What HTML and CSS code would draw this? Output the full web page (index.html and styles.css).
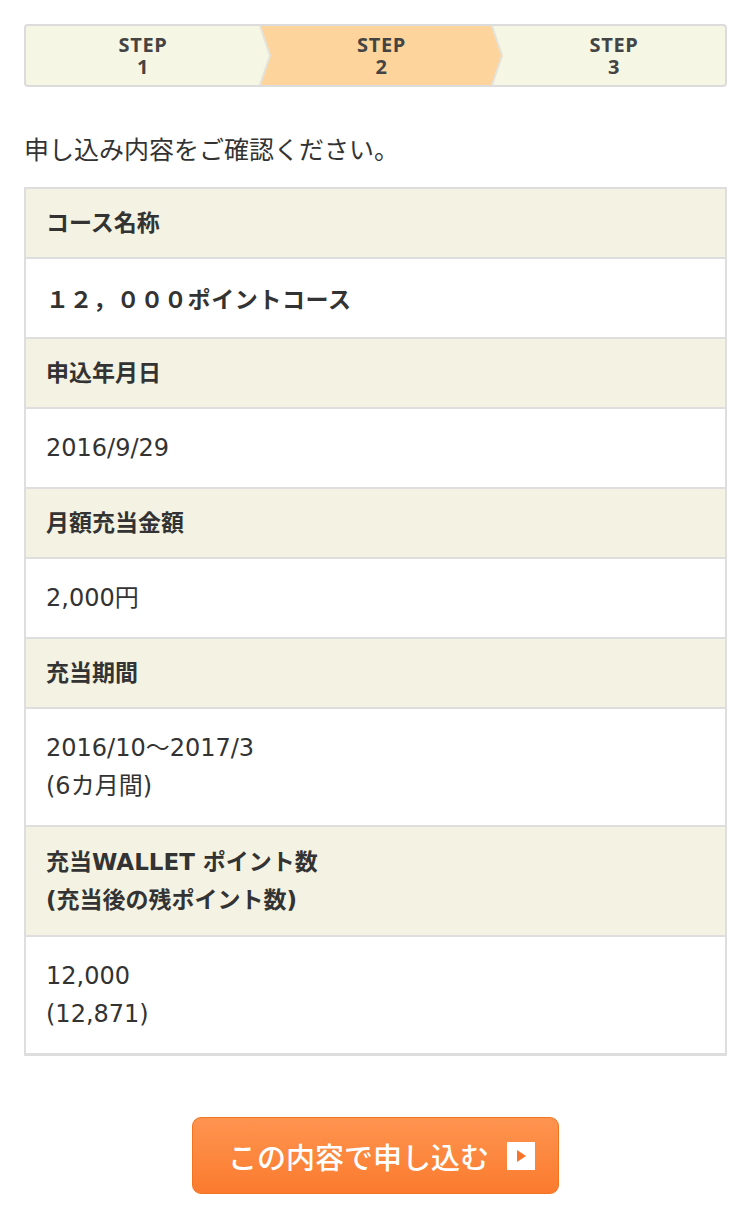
FILE: index.html
```html
<!DOCTYPE html>
<html lang="ja">
<head>
  <meta charset="UTF-8" />
  <meta name="viewport" content="width=device-width, initial-scale=1" />
  <title>申し込み内容の確認</title>
  <link rel="stylesheet" href="styles.css">
</head>
<body>
  <div class="steps">
    <div class="step first">STEP<br>1</div>
    <div class="step current">STEP<br>2</div>
    <div class="step last">STEP<br>3</div>
    <svg class="sep sep-1" width="14" height="59" viewBox="0 0 14 59"><polyline points="1,0 11,29.5 1,59" fill="none" stroke="#e3e3dc" stroke-width="2"/></svg>
    <svg class="sep sep-2" width="14" height="59" viewBox="0 0 14 59"><polyline points="1,0 11,29.5 1,59" fill="none" stroke="#e3e3dc" stroke-width="2"/></svg>
  </div>

  <p class="lead">申し込み内容をご確認ください。</p>

  <div class="confirm">
    <div class="label">コース名称</div>
    <div class="value course">１２，０００ポイントコース</div>
    <div class="label">申込年月日</div>
    <div class="value">2016/9/29</div>
    <div class="label">月額充当金額</div>
    <div class="value">2,000円</div>
    <div class="label">充当期間</div>
    <div class="value">2016/10〜2017/3<br>(6カ月間)</div>
    <div class="label tall">充当WALLET ポイント数<br>(充当後の残ポイント数)</div>
    <div class="value">12,000<br>(12,871)</div>
  </div>

  <div class="actions">
    <button class="submit">この内容で申し込む
      <span class="arrow">
        <svg width="28" height="28" viewBox="0 0 28 28"><rect width="28" height="28" fill="#fff"/><path d="M10 8 L19 14 L10 20 Z" fill="#f7742a"/></svg>
      </span>
    </button>
  </div>
</body>
</html>
```

FILE: styles.css
```css
body {
  margin: 0;
  padding: 24px 23px 30px 24px;
  background: #fff;
  color: #333;
  font-family: "Noto Sans CJK JP", "Noto Sans", sans-serif;
}
.steps {
  position: relative;
  display: flex;
  height: 59px;
  border: 2px solid #dcdcdc;
  border-radius: 4px;
  background: #f6f6e4;
  overflow: hidden;
}
.step {
  display: flex;
  flex-direction: column;
  justify-content: center;
  align-items: center;
  text-align: center;
  font-family: "Open Sans", sans-serif;
  font-weight: 700;
  font-size: 20px;
  letter-spacing: 0.6px;
  line-height: 22px;
  color: #444;
}
.step.first {
  flex: 0 0 234px;
}
.step.current {
  flex: 0 0 243px;
  background: #fdd49c;
  clip-path: polygon(0 0, calc(100% - 11px) 0, 100% 50%, calc(100% - 11px) 100%, 0 100%, 10px 50%);
}
.step.last {
  flex: 1;
}
.sep {
  position: absolute;
  top: 0;
}
.sep-1 {
  left: 233px;
}
.sep-2 {
  left: 465px;
}
.lead {
  margin: 46px 0 24px;
  font-size: 25px;
  line-height: 30px;
}
.confirm {
  border: 2px solid #dedede;
  border-bottom-width: 1px;
}
.label,
.value {
  border-bottom: 2px solid #dedede;
  padding: 0 20px;
}
.label {
  padding-top: 15px;
  padding-bottom: 15px;
  line-height: 38px;
  background: #f3f2e3;
  font-family: "DejaVu Sans", "Noto Sans CJK JP", sans-serif;
  font-size: 23px;
  font-weight: 700;
}
.label.tall {
  padding-top: 16px;
  padding-bottom: 16px;
}
.value {
  padding-top: 20px;
  padding-bottom: 20px;
  line-height: 38px;
  font-family: "DejaVu Sans", "Noto Sans CJK JP", sans-serif;
  font-size: 24px;
}
.value.course {
  font-family: "Noto Sans CJK JP", sans-serif;
  font-size: 23px;
  font-weight: 700;
  letter-spacing: 0.6px;
}
.actions {
  display: flex;
  justify-content: center;
  margin-top: 61px;
}
.submit {
  display: flex;
  align-items: center;
  justify-content: center;
  gap: 18px;
  width: 367px;
  height: 77px;
  padding: 0 0 0 12px;
  border: 1px solid #f3741f;
  border-radius: 9px;
  background: linear-gradient(#fe9450, #fb7b2e);
  color: #fff;
  font-family: "Noto Sans CJK JP", sans-serif;
  font-size: 29px;
  font-weight: 500;
  cursor: pointer;
}
.arrow {
  display: flex;
}
```
